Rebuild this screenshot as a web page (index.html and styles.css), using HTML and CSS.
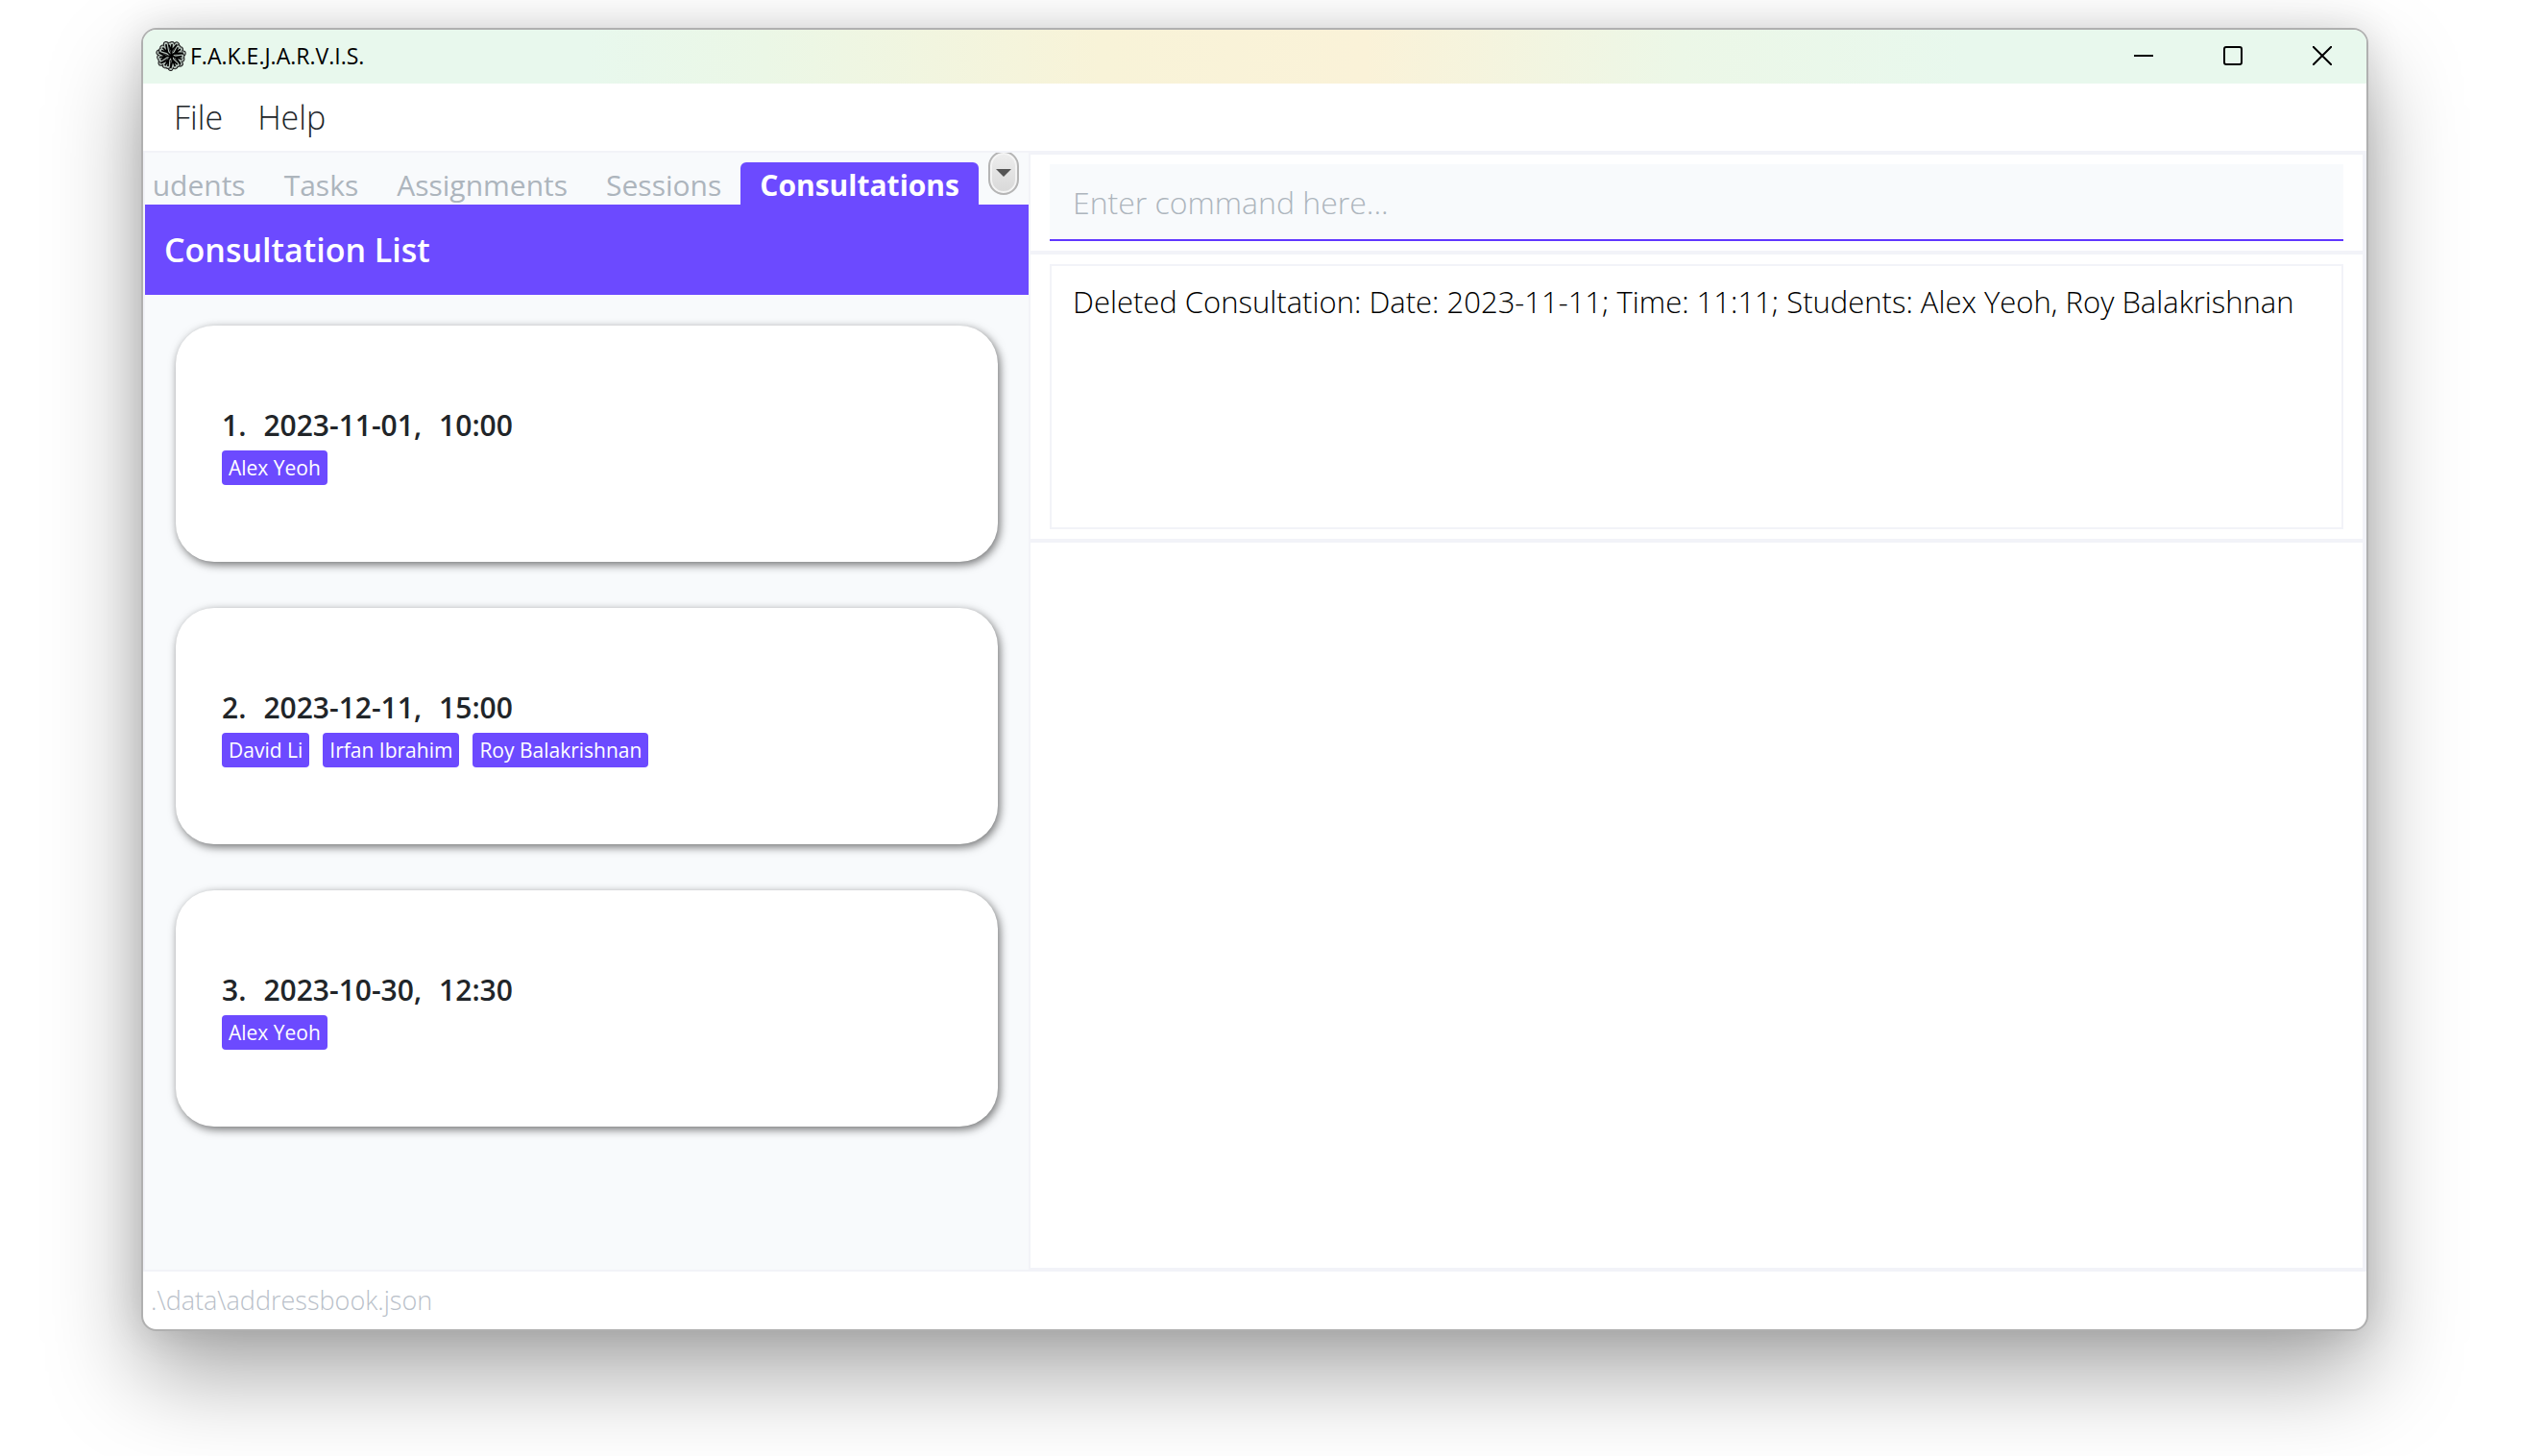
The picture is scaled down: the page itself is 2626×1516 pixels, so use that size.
FILE: index.html
```html
<!DOCTYPE html>
<html lang="en">
<head>
<meta charset="utf-8">
<title>F.A.K.E.J.A.R.V.I.S.</title>
<link rel="stylesheet" href="styles.css">
</head>
<body>
<div class="window">
  <header class="titlebar">
    <svg class="logo" viewBox="-16 -16 32 32" aria-hidden="true">
      <defs>
        <g id="petal" fill="none" stroke-linecap="round">
          <path d="M0 -2V-12M0 -5L5 -12M0 -5L-3 -11" stroke="#222" stroke-width="6"/>
          <path d="M0 -2V-12M0 -5L5 -12M0 -5L-3 -11" stroke="#b4c0b9" stroke-width="4"/>
        </g>
        <path id="vein" d="M0 0V-12M0 -5L5 -12M0 -5L-3 -11" fill="none" stroke="#000" stroke-width="1.7"/>
      </defs>
      <use href="#petal" transform="rotate(5)"/>
      <use href="#petal" transform="rotate(56)"/>
      <use href="#petal" transform="rotate(108)"/>
      <use href="#petal" transform="rotate(159)"/>
      <use href="#petal" transform="rotate(211)"/>
      <use href="#petal" transform="rotate(262)"/>
      <use href="#petal" transform="rotate(314)"/>
      <use href="#vein" transform="rotate(5)"/>
      <use href="#vein" transform="rotate(56)"/>
      <use href="#vein" transform="rotate(108)"/>
      <use href="#vein" transform="rotate(159)"/>
      <use href="#vein" transform="rotate(211)"/>
      <use href="#vein" transform="rotate(262)"/>
      <use href="#vein" transform="rotate(314)"/>
    </svg>
    <h1 class="title">F.A.K.E.J.A.R.V.I.S.</h1>
    <div class="controls">
      <button class="control" type="button" aria-label="Minimize"><svg viewBox="0 0 20 20"><path d="M0 10H20"/></svg></button>
      <button class="control" type="button" aria-label="Maximize"><svg viewBox="0 0 20 20"><rect x="1" y="1" width="18" height="18" rx="2"/></svg></button>
      <button class="control" type="button" aria-label="Close"><svg viewBox="0 0 20 20"><path d="M0 0L20 20M20 0L0 20"/></svg></button>
    </div>
  </header>
  <nav class="menubar">
    <button class="menu" type="button">File</button>
    <button class="menu" type="button">Help</button>
  </nav>
  <main class="split">
    <section class="side">
      <div class="strip">
        <div class="tabs" role="tablist">
          <button class="tab" type="button" role="tab">Students</button>
          <button class="tab" type="button" role="tab">Tasks</button>
          <button class="tab" type="button" role="tab">Assignments</button>
          <button class="tab" type="button" role="tab">Sessions</button>
          <button class="tab tab-active" type="button" role="tab" aria-selected="true">Consultations</button>
        </div>
        <button class="more" type="button" aria-label="Show all tabs"><svg viewBox="0 0 16 9"><path d="M0 0H16L8 8Z"/></svg></button>
      </div>
      <h2 class="list-title">Consultation List</h2>
      <ul class="cards">
        <li class="card">
          <p class="when"><span>1.</span><span>2023-11-01,</span><span>10:00</span></p>
          <div class="chips"><span class="chip">Alex Yeoh</span></div>
        </li>
        <li class="card">
          <p class="when"><span>2.</span><span>2023-12-11,</span><span>15:00</span></p>
          <div class="chips"><span class="chip">David Li</span><span class="chip">Irfan Ibrahim</span><span class="chip">Roy Balakrishnan</span></div>
        </li>
        <li class="card">
          <p class="when"><span>3.</span><span>2023-10-30,</span><span>12:30</span></p>
          <div class="chips"><span class="chip">Alex Yeoh</span></div>
        </li>
      </ul>
    </section>
    <section class="work">
      <div class="pane"><input class="command" type="text" aria-label="Command" placeholder="Enter command here..."></div>
      <div class="pane"><textarea class="result" aria-label="Result" readonly>Deleted Consultation: Date: 2023-11-11; Time: 11:11; Students: Alex Yeoh, Roy Balakrishnan</textarea></div>
      <div class="blank"></div>
    </section>
  </main>
  <footer class="status">.\data\addressbook.json</footer>
</div>
</body>
</html>
```
FILE: styles.css
```css
* { box-sizing: border-box; }

body {
  margin: 0;
  min-height: 100vh;
  padding: 29px 160px 130px 147px;
  display: flex;
  background: #fff;
  color: #212529;
  font-family: "Open Sans", "Noto Sans", sans-serif;
}

button, input, textarea {
  font-family: inherit;
  border: 0;
  margin: 0;
  padding: 0;
  background: none;
  color: inherit;
}

h1, h2, p, ul { margin: 0; padding: 0; }

.window {
  flex: 1;
  min-width: 0;
  display: flex;
  flex-direction: column;
  overflow: hidden;
  border: 2px solid #b0b0b0;
  border-radius: 16px;
  background: #fff;
  box-shadow: 0 46px 96px rgba(0, 0, 0, 0.34), 0 0 40px rgba(0, 0, 0, 0.12);
}

.titlebar {
  display: flex;
  align-items: center;
  height: 56px;
  padding: 0 0 2px 13px;
  background: linear-gradient(90deg, #e8f8ed 20%, #ebf7e6 28%, #f8f3d8 43%, #faf2d8 55%, #ecf7e7 69%, #e8f8ed 82%);
}

.logo { width: 32px; height: 32px; }

.title {
  padding-left: 4px;
  font-size: 23px;
  font-weight: 400;
  line-height: 32px;
  color: #000;
}

.controls { display: flex; margin-left: auto; height: 100%; }

.control { width: 93px; display: grid; place-items: center; }

.control svg {
  width: 20px;
  height: 20px;
  fill: none;
  stroke: #000;
  stroke-width: 2;
}

.menubar {
  display: flex;
  height: 70px;
  padding: 0 14px;
}

.menu { padding: 0 18px; font-size: 34px; font-weight: 300; }

.split {
  flex: 1;
  display: grid;
  grid-template-columns: 924fr 1391fr;
  border-top: 2px solid #f2f3f8;
}

.side {
  min-width: 0;
  border: solid #f2f3f8;
  border-width: 0 2px 2px;
  background: #f8fafc;
}

.strip {
  display: flex;
  height: 54px;
  padding: 0 10px 0 8px;
  gap: 10px;
  overflow: hidden;
}

.tabs {
  flex: 1;
  min-width: 0;
  display: flex;
  justify-content: flex-end;
  align-items: flex-end;
  overflow: hidden;
}

.tab {
  flex: none;
  height: 44px;
  padding: 4px 20px 0;
  font-size: 30px;
  line-height: 40px;
  color: #adb5bd;
}

.tab-active {
  border-radius: 6px 6px 0 0;
  background: #6c4aff;
  color: #fff;
  font-weight: 700;
}

.more {
  width: 32px;
  height: 46px;
  margin-top: -2px;
  border: 2px solid #b5b5b5;
  border-radius: 16px;
  background: linear-gradient(#eee, #d8d8d8);
  box-shadow: inset 0 0 0 2px #f4f4f4;
  display: grid;
  place-items: center;
}

.more svg { width: 16px; height: 9px; fill: #555; }

.list-title {
  padding: 0 20px;
  background: #6c4aff;
  color: #fff;
  font-size: 34px;
  font-weight: 600;
  line-height: 94px;
}

.cards {
  display: grid;
  gap: 48px;
  padding: 32px;
  list-style: none;
}

.card {
  min-height: 246px;
  padding: 0 48px;
  display: flex;
  flex-direction: column;
  justify-content: center;
  gap: 2px;
  border-radius: 40px;
  background: #fff;
  box-shadow: 2px 3px 10px rgba(0, 0, 0, 0.55);
}

.when {
  display: flex;
  gap: 18px;
  font-size: 30px;
  font-weight: 600;
  line-height: 48px;
}

.chips { display: flex; gap: 14px; }

.chip {
  padding: 0 7px;
  border-radius: 4px;
  background: #6c4aff;
  color: #fff;
  font-size: 21px;
  font-weight: 500;
  line-height: 36px;
}

.work {
  min-width: 0;
  display: flex;
  flex-direction: column;
  border: solid #f2f3f8;
  border-width: 2px 4px 4px 0;
}

.pane {
  display: flex;
  padding: 10px 20px;
  border-bottom: 4px solid #f2f3f8;
}

.command {
  flex: 1;
  height: 80px;
  padding: 0 24px;
  border-bottom: 2px solid #6037ff;
  background: #f8fafc;
  font-size: 32px;
  font-weight: 300;
}

.command::placeholder { color: #adb5bd; opacity: 1; }

.result {
  flex: 1;
  height: 276px;
  padding: 14px 22px;
  border: 2px solid #f2f3f8;
  resize: none;
  overflow: hidden;
  color: #000;
  font-size: 31px;
  font-weight: 300;
  line-height: 46px;
}

.blank { flex: 1; }

.status {
  padding: 0 8px;
  color: #b9bfc9;
  font-size: 27px;
  font-weight: 300;
  line-height: 60px;
}
```
